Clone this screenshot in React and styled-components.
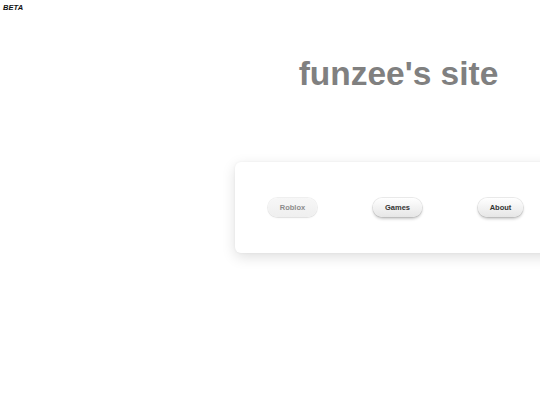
import React from "react";
import styled, { createGlobalStyle } from "styled-components";

const GlobalStyle = createGlobalStyle`
  html, body {
    margin: 0;
    padding: 0;
    background: #ffffff;
    overflow: hidden;
  }
  body {
    font-family: "Liberation Sans", Arial, sans-serif;
  }
`;

const Page = styled.div`
  position: relative;
  width: 540px;
  height: 405px;
  overflow: hidden;
`;

const Beta = styled.div`
  padding: 3px 0 0 3px;
  font-family: "Liberation Sans", Arial, sans-serif;
  font-size: 7.5px;
  font-weight: 700;
  font-style: italic;
  color: #111111;
  letter-spacing: 0.1px;
`;

const Main = styled.main`
  width: 328px;
  margin-left: 235px;
  display: flex;
  flex-direction: column;
`;

const Title = styled.h1`
  margin: 42px 0 0;
  padding-right: 1px;
  text-align: center;
  font-family: "Liberation Sans", Arial, sans-serif;
  font-size: 33.5px;
  font-weight: 700;
  color: #808080;
  line-height: 40px;
`;

const Card = styled.div`
  margin-top: 68px;
  height: 91px;
  background: #ffffff;
  border-radius: 6px;
  box-shadow: 0 4px 14px rgba(0, 0, 0, 0.13), 0 0 3px rgba(0, 0, 0, 0.05);
  display: flex;
  align-items: center;
  gap: 56px;
  padding: 0 0 0 33px;
`;

const NavButton = styled.button`
  flex: none;
  height: 19px;
  width: ${(p) => p.$w}px;
  padding: 0;
  border: none;
  border-radius: 10px;
  font-family: "Liberation Sans", Arial, sans-serif;
  font-size: 7.5px;
  font-weight: 700;
  cursor: pointer;
  color: ${(p) => (p.disabled ? "#8c8c8c" : "#333333")};
  background: ${(p) =>
    p.disabled
      ? "linear-gradient(#f7f7f7, #efefef)"
      : "linear-gradient(#ffffff, #e6e6e6)"};
  box-shadow: ${(p) =>
    p.disabled
      ? "0 0 0 1px rgba(0,0,0,0.06), 0 1px 2px rgba(0,0,0,0.08)"
      : "0 0 0 1px rgba(0,0,0,0.08), 0 2px 3px rgba(0,0,0,0.22)"};
`;

export default function App() {
  return (
    <Page>
      <GlobalStyle />
      <Beta>BETA</Beta>
      <Main>
        <Title>funzee's site</Title>
        <Card>
          <NavButton $w={49} disabled>
            Roblox
          </NavButton>
          <NavButton $w={49}>Games</NavButton>
          <NavButton $w={45}>About</NavButton>
        </Card>
      </Main>
    </Page>
  );
}
